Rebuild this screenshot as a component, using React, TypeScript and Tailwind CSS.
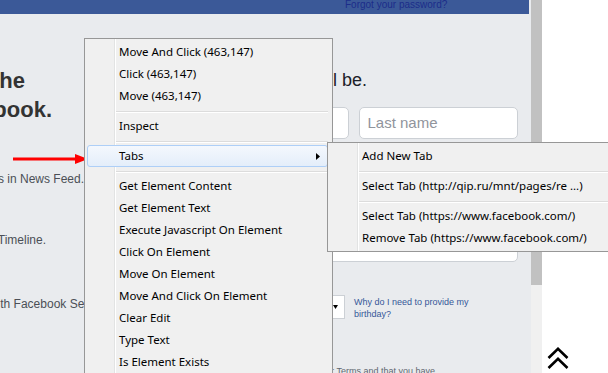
import React from "react";

type Entry = { label?: string; sep?: boolean; hl?: boolean; arrow?: boolean };

const mainItems: Entry[] = [
  { label: "Move And Click (463,147)" },
  { label: "Click (463,147)" },
  { label: "Move (463,147)" },
  { sep: true },
  { label: "Inspect" },
  { sep: true },
  { label: "Tabs", hl: true, arrow: true },
  { sep: true },
  { label: "Get Element Content" },
  { label: "Get Element Text" },
  { label: "Execute Javascript On Element" },
  { label: "Click On Element" },
  { label: "Move On Element" },
  { label: "Move And Click On Element" },
  { label: "Clear Edit" },
  { label: "Type Text" },
  { label: "Is Element Exists" },
  { label: "Wait Element" },
];

const subItems: Entry[] = [
  { label: "Add New Tab" },
  { sep: true },
  { label: "Select Tab (http://qip.ru/mnt/pages/re ...)" },
  { sep: true },
  { label: "Select Tab (https://www.facebook.com/)" },
  { label: "Remove Tab (https://www.facebook.com/)" },
];

function MenuRows({ items }: { items: Entry[] }) {
  return (
    <>
      {items.map((it, i) =>
        it.sep ? (
          <div key={i} className="h-[8px] pl-[27px] pt-[4px]">
            <div className="h-px bg-[#dcdcdc]" />
            <div className="h-px bg-white" />
          </div>
        ) : (
          <div
            key={i}
            className={
              it.hl
                ? "relative h-[22px] flex items-center pl-[31px] rounded-[3px] border border-[#aecff7] bg-gradient-to-b from-[#f4f8fd] to-[#e4eefa] whitespace-nowrap"
                : "h-[22px] flex items-center pl-[31px] border border-transparent whitespace-nowrap"
            }
          >
            <span>{it.label}</span>
            {it.arrow && (
              <svg
                className="absolute right-[7px] top-[7px]"
                width="4"
                height="7"
                viewBox="0 0 4 7"
              >
                <polygon points="0,0 4,3.5 0,7" fill="#000" />
              </svg>
            )}
          </div>
        )
      )}
    </>
  );
}

export default function App() {
  return (
    <div className="relative w-[608px] h-[373px] overflow-hidden flex bg-white font-['Liberation_Sans',Arial,sans-serif]">
      {/* Facebook page */}
      <div className="w-[531px] flex-none flex flex-col bg-[#e9ebee]">
        <div className="h-[14px] w-[529px] flex-none bg-[#3b5998] overflow-hidden">
          <div className="ml-[345px] text-[10px] leading-[9px] text-[#1c2d8a] whitespace-nowrap">
            Forgot your password?
          </div>
        </div>
        <div className="flex flex-1">
          {/* left marketing column */}
          <div className="w-[84px] flex-none overflow-hidden flex flex-col">
            <div className="mt-[52px] text-[22px] leading-[29px] font-bold text-[#333]">
              <div className="w-[25px] flex justify-end whitespace-nowrap">
                Connect with friends and the
              </div>
              <div className="w-[52px] flex justify-end whitespace-nowrap">
                world around you on Facebook.
              </div>
            </div>
            <div className="mt-[47px] text-[12px] leading-[16px] text-[#4b4f56]">
              <div className="w-[84px] flex justify-end whitespace-nowrap">
                See photos and updates from friends in News Feed.
              </div>
              <div className="mt-[45px] w-[46px] flex justify-end whitespace-nowrap">
                Share what's new in your life on your Timeline.
              </div>
              <div className="mt-[48px] w-[111px] flex justify-end whitespace-nowrap">
                Find more of what you're looking for with Facebook Search.
              </div>
            </div>
          </div>
          {/* form column */}
          <div className="ml-[106px] w-[328px] flex-none flex flex-col">
            <div className="mt-[55px] w-[177px] flex justify-end whitespace-nowrap text-[18px] leading-[22px] text-[#1d2129]">
              It's free and always will be.
            </div>
            <div className="mt-[16px] flex gap-[10px]">
              <div className="w-[160px] h-[32px] bg-white border border-[#ccd0d5] rounded-[5px]" />
              <div className="w-[159px] h-[32px] bg-white border border-[#ccd0d5] rounded-[5px] flex items-center pl-[7px] text-[15px] text-[#90949c]">
                Last name
              </div>
            </div>
            <div className="mt-[11px] w-[328px] h-[32px] bg-white border border-[#ccd0d5] rounded-[5px]" />
            <div className="mt-[8px] w-[328px] h-[32px] bg-white border border-[#ccd0d5] rounded-[5px]" />
            <div className="mt-[8px] w-[328px] h-[32px] bg-white border border-[#ccd0d5] rounded-[5px]" />
            <div className="mt-[33px] flex items-start">
              <div className="flex gap-[2px]">
                {[50, 50, 51].map((w, i) => (
                  <div
                    key={i}
                    style={{ width: w }}
                    className="h-[24px] bg-white border border-[#ccd0d5] flex items-center justify-end pr-[6px]"
                  >
                    <svg width="5" height="4" viewBox="0 0 5 4">
                      <polygon points="0,0 5,0 2.5,4" fill="#000" />
                    </svg>
                  </div>
                ))}
              </div>
              <div className="ml-[9px] mt-[1px] text-[9px] leading-[12px] text-[#365899]">
                <div>Why do I need to provide my</div>
                <div>birthday?</div>
              </div>
            </div>
            <div className="mt-[45px] w-[245px] flex justify-end whitespace-nowrap text-[9px] leading-[12px] text-[#616770]">
              By clicking Create Account, you agree to our Terms and that you have
            </div>
          </div>
        </div>
      </div>
      {/* scrollbar */}
      <div className="w-[11px] flex-none flex flex-col bg-[#f0f0f0]">
        <div className="h-[285px] bg-[#c1c1c1]" />
      </div>
      <div className="flex-1 bg-white" />

      {/* back to top chevron */}
      <svg
        className="absolute left-[547px] top-[347px]"
        width="22"
        height="23"
        viewBox="0 0 22 23"
        fill="none"
        stroke="#000"
        strokeWidth="2.6"
      >
        <polyline points="1.5,11 11,1.8 20.5,11" />
        <polyline points="1.5,21 11,11.8 20.5,21" />
      </svg>

      {/* red arrow */}
      <svg
        className="absolute left-[13px] top-[153px]"
        width="76"
        height="12"
        viewBox="0 0 76 12"
      >
        <rect x="0" y="4.5" width="64" height="3" fill="#f00" />
        <polygon points="62,1 75,6 62,11" fill="#f00" />
      </svg>

      {/* main context menu */}
      <div className="absolute left-[84px] top-[38px] w-[249px] h-[400px] bg-[#f0f0f0] border border-[#979797] pt-[2px] pl-[2px] pr-[4px] text-[11.5px] text-black font-['Noto_Sans',sans-serif]">
        <div className="absolute left-[29px] top-0 bottom-0 w-px bg-[#e2e3e3]" />
        <div className="absolute left-[30px] top-0 bottom-0 w-px bg-white" />
        <MenuRows items={mainItems} />
      </div>

      {/* submenu */}
      <div className="absolute left-[327px] top-[142px] w-[300px] h-[110px] bg-[#f0f0f0] border border-[#979797] pt-[2px] pl-[2px] pr-[4px] text-[11.5px] text-black font-['Noto_Sans',sans-serif]">
        <div className="absolute left-[29px] top-0 bottom-0 w-px bg-[#e2e3e3]" />
        <div className="absolute left-[30px] top-0 bottom-0 w-px bg-white" />
        <MenuRows items={subItems} />
      </div>
    </div>
  );
}
